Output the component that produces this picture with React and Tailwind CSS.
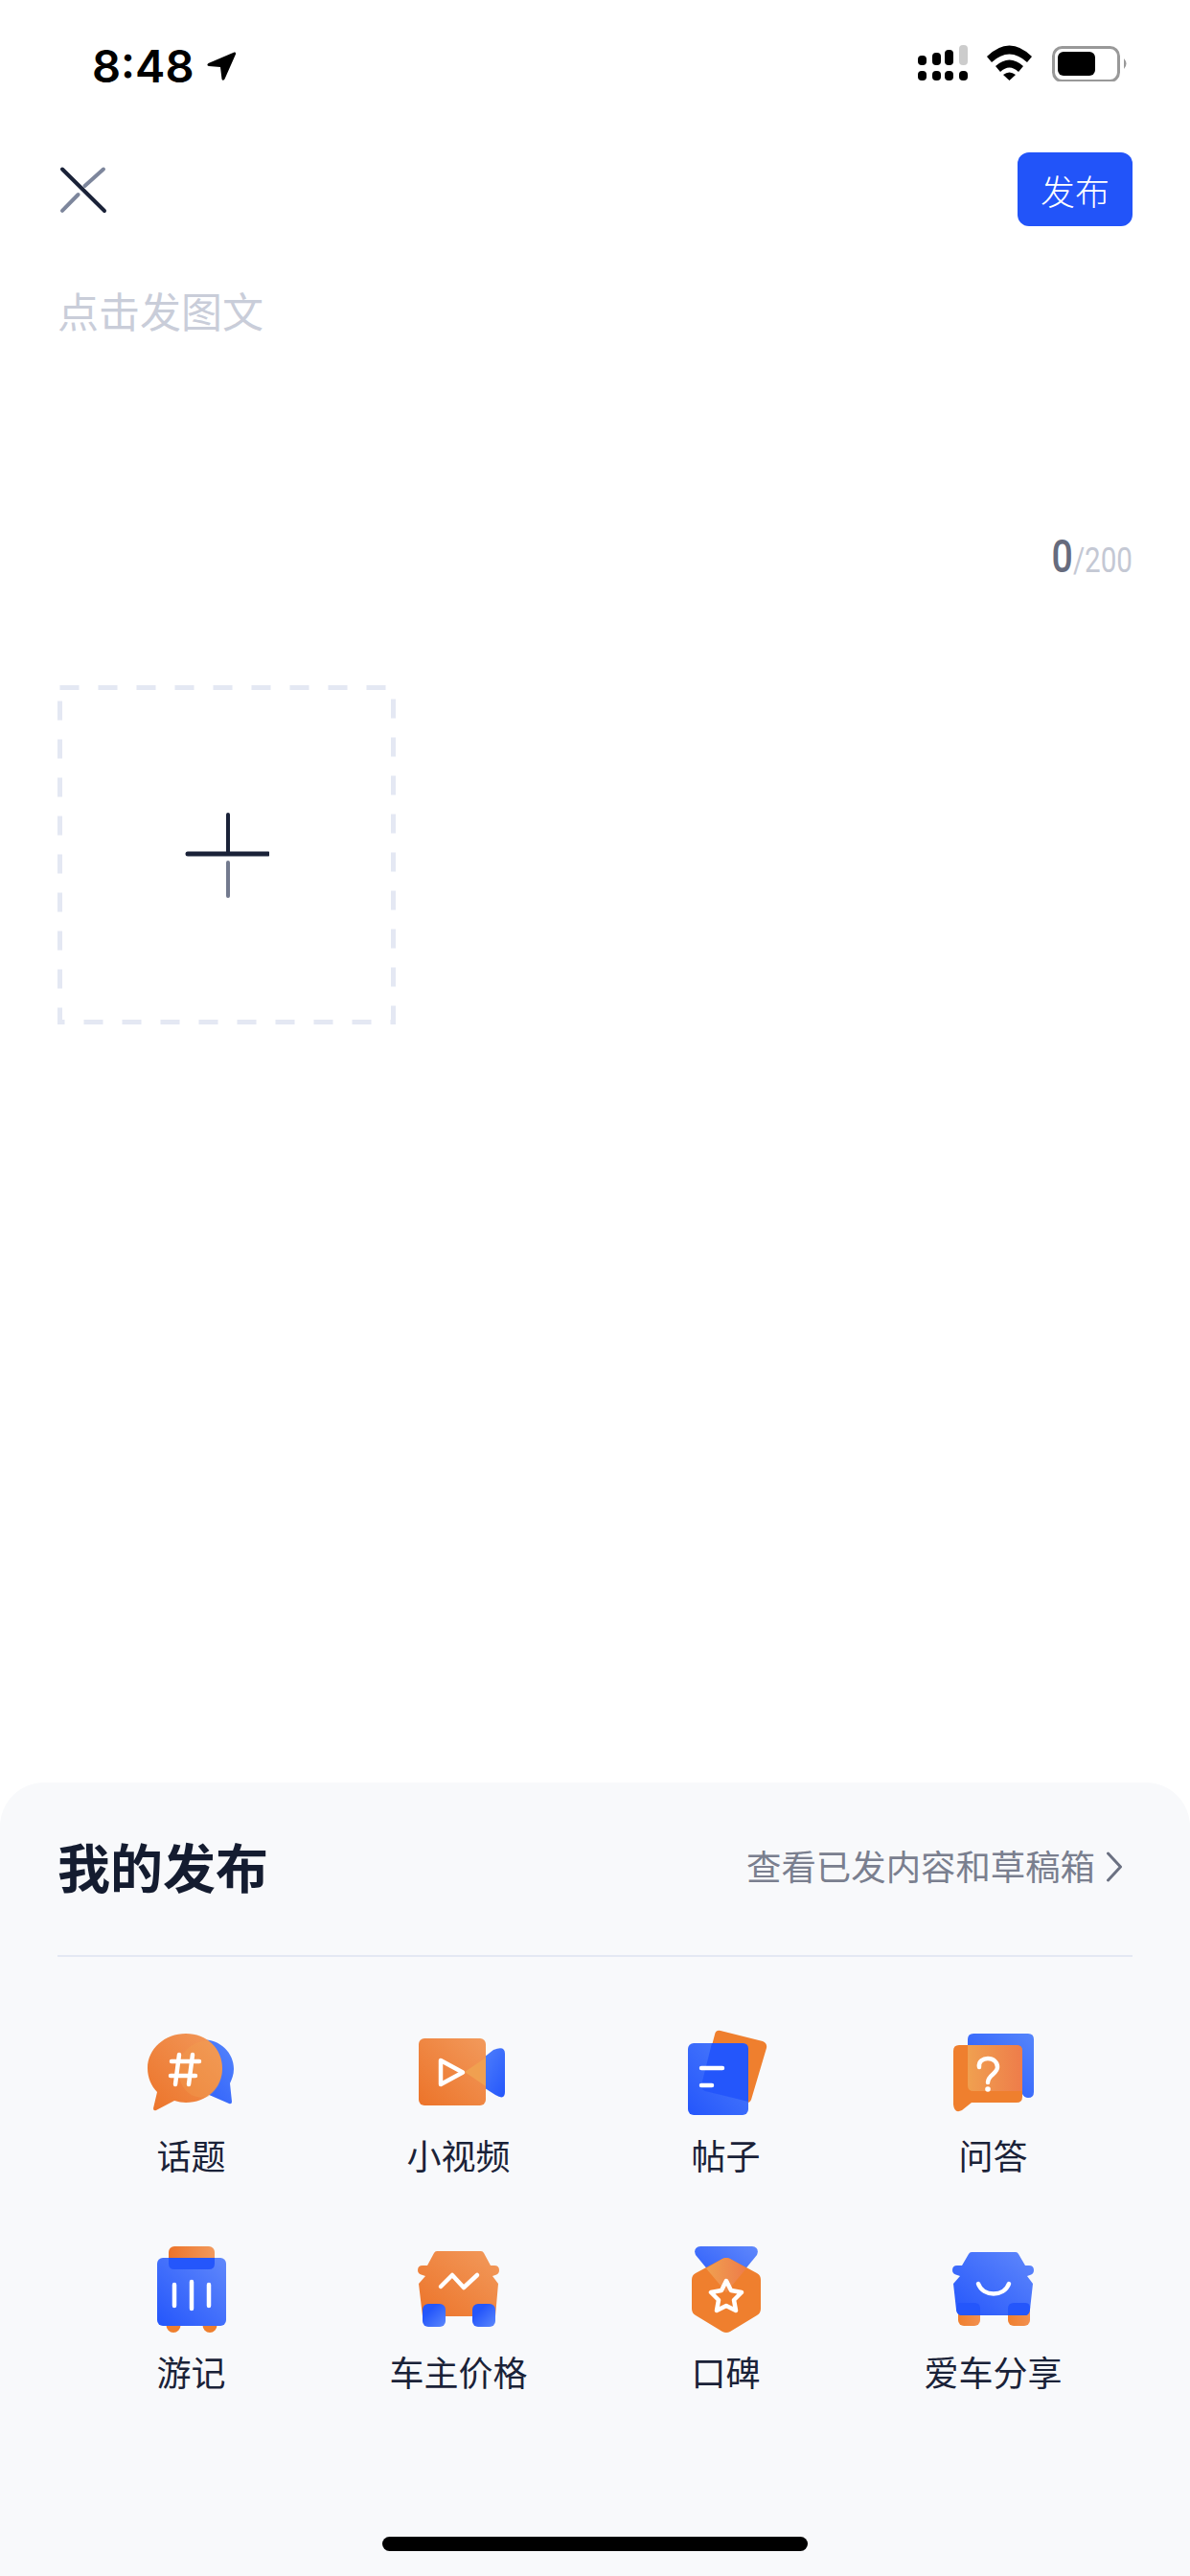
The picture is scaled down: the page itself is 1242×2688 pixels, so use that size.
import React from "react";

const cjk = "font-['Noto_Sans_CJK_SC','Noto_Sans',sans-serif]";

const LocationArrow = () => (
  <svg width="32" height="32" viewBox="0 0 32 32">
    <path d="M29.5 1.5 L2.5 13 Q0 15 3 16 L15 17 L16.5 29.5 Q17.5 32 19.5 29.5 L31 3.5 Q31.5 1 29.5 1.5 Z" fill="#000" />
  </svg>
);

const StatusIcons = () => (
  <svg width="219" height="38" viewBox="0 0 219 38">
    <rect x="0" y="11" width="9" height="10" rx="4" fill="#000" />
    <rect x="15" y="8" width="9" height="13" rx="4" fill="#000" />
    <rect x="28" y="5" width="9" height="16" rx="4" fill="#000" />
    <rect x="43" y="0" width="9" height="21" rx="4" fill="#ccc" />
    <rect x="0" y="27" width="9" height="10" rx="4" fill="#000" />
    <rect x="15" y="27" width="9" height="10" rx="4" fill="#000" />
    <rect x="28" y="27" width="9" height="10" rx="4" fill="#000" />
    <rect x="43" y="27" width="9" height="10" rx="4" fill="#000" />
    <path d="M72 12 Q95.5 -11 119 12 L114 18 Q95.5 1 77 18 Z" fill="#000" />
    <path d="M81 22 Q95.5 9 110 22 L105 28 Q95.5 19 86 28 Z" fill="#000" />
    <path d="M89 31 Q95.5 26 102 31 L95.5 37 Z" fill="#000" />
    <rect x="141.5" y="2.5" width="68" height="35" rx="9" fill="none" stroke="#999" strokeWidth="3" />
    <rect x="146" y="7" width="39" height="25" rx="6" fill="#000" />
    <path d="M215 14 Q220 19.5 215 25 Z" fill="#999" />
  </svg>
);

const TopicIcon = () => (
  <svg width="92" height="82" viewBox="0 0 92 82">
    <defs>
      <linearGradient id="ta" x1="0" y1="1" x2="1" y2="0">
        <stop offset="0" stopColor="#ec7329" />
        <stop offset="1" stopColor="#f29a5c" />
      </linearGradient>
      <linearGradient id="tb" x1="0" y1="1" x2="1" y2="0">
        <stop offset="0" stopColor="#2456fb" />
        <stop offset="1" stopColor="#5585fb" />
      </linearGradient>
    </defs>
    <path d="M48 7 C72 2 90 18 90 37 C90 43 88 47 86 52 L88 71 Q88 74 85 73 L62 63 C52 68 35 68 30 50 Z" fill="url(#tb)" />
    <path d="M40 0 C62 0 78 16 78 36 C78 56 62 72 40 72 C36 72 32 71 28 70 L9 80 Q6 81 6 78 L10 61 C4 55 0 46 0 36 C0 16 18 0 40 0 Z" fill="url(#ta)" />
    <path d="M63 7 C72 13 78 24 78 37 C78 50 72 60 63 66 C45 70 32 56 32 37 C32 22 45 8 63 7 Z" fill="#f0a050" opacity="0.35" />
    <path d="M33 22 L29 53 M47 22 L43 53 M25 29 L54 29 M24 44 L50 44" stroke="#fff" strokeWidth="4.5" strokeLinecap="round" />
  </svg>
);

const VideoIcon = () => (
  <svg width="97" height="72" viewBox="-7 0 97 72">
    <defs>
      <linearGradient id="va" x1="0" y1="1" x2="1" y2="0">
        <stop offset="0" stopColor="#ec7329" />
        <stop offset="1" stopColor="#f29a5c" />
      </linearGradient>
      <linearGradient id="vb" x1="0" y1="0" x2="1" y2="1">
        <stop offset="0" stopColor="#5585fb" />
        <stop offset="1" stopColor="#2456fb" />
      </linearGradient>
    </defs>
    <path d="M60 26 L78 12 Q90 7 90 16 L90 56 Q90 65 80 59 L60 46 Z" fill="url(#vb)" />
    <rect x="0" y="0" width="70" height="70" rx="6" fill="url(#va)" />
    <path d="M48 35 L70 20 L70 50 Z" fill="#f0a050" />
    <path d="M23 23 L23 48 L46 35.5 Z" fill="none" stroke="#fff" strokeWidth="4.5" strokeLinejoin="round" />
  </svg>
);

const PostIcon = () => (
  <svg width="88" height="90" viewBox="-4 0 88 90">
    <defs>
      <linearGradient id="pa" x1="0" y1="1" x2="1" y2="0">
        <stop offset="0" stopColor="#2456fb" />
        <stop offset="1" stopColor="#4f7ffb" />
      </linearGradient>
    </defs>
    <path d="M34 1 L78 12 Q83 14 82 19 L66 73 Q64 77 60 76 L18 64 Q13 62 14 58 L28 5 Q29 0 34 1 Z" fill="#ef7f2e" />
    <rect x="0" y="14" width="63" height="75" rx="6" fill="url(#pa)" />
    <path d="M25 14 L57 14 Q63 14 63 20 L63 75 L18 64 Q13 62 14 58 Z" fill="#2456fb" />
    <path d="M14 40 L36 40 M14 58 L25 58" stroke="#fff" strokeWidth="4.5" strokeLinecap="round" />
  </svg>
);

const QuestionIcon = () => (
  <svg width="84" height="82" viewBox="0 0 84 82">
    <defs>
      <linearGradient id="qa" x1="0" y1="1" x2="1" y2="0">
        <stop offset="0" stopColor="#2456fb" />
        <stop offset="1" stopColor="#5585fb" />
      </linearGradient>
      <linearGradient id="qb" x1="0" y1="0" x2="1" y2="0">
        <stop offset="0" stopColor="#f0a050" />
        <stop offset="1" stopColor="#ee7c4a" />
      </linearGradient>
    </defs>
    <path d="M15 6 Q15 0 21 0 L78 0 Q84 0 84 6 L84 61 Q84 67 78 67 Q74 67 72 63 L15 63 Z" fill="url(#qa)" />
    <path d="M0 18 Q0 12 6 12 L66 12 Q72 12 72 18 L72 66 Q72 72 66 72 L19 72 L9 80 Q1 84 0 74 Z" fill="#ef7f2e" />
    <path d="M15 12 L66 12 Q72 12 72 18 L72 60 L21 60 Q15 60 15 54 Z" fill="url(#qb)" />
    <path d="M27 35 C26 29 31 26 36 26 C42 26 46 30 46 35 C46 42 36 43 36 51" fill="none" stroke="#fff" strokeWidth="4.5" strokeLinecap="round" />
    <circle cx="36" cy="58" r="2.8" fill="#fff" />
  </svg>
);

const TravelIcon = () => (
  <svg width="72" height="90" viewBox="0 0 72 90">
    <defs>
      <linearGradient id="ra" x1="0" y1="0" x2="1" y2="0">
        <stop offset="0" stopColor="#ec7329" />
        <stop offset="1" stopColor="#f29a5c" />
      </linearGradient>
      <linearGradient id="rb" x1="0" y1="1" x2="1" y2="0">
        <stop offset="0" stopColor="#2456fb" />
        <stop offset="1" stopColor="#6088fb" />
      </linearGradient>
    </defs>
    <rect x="12" y="0" width="48" height="24" rx="6" fill="url(#ra)" />
    <circle cx="17" cy="82.5" r="7.5" fill="#ef7f2e" />
    <circle cx="55" cy="82.5" r="7.5" fill="#ef7f2e" />
    <rect x="0" y="12" width="72" height="71" rx="6" fill="url(#rb)" />
    <path d="M12 12 L60 12 L60 18 Q60 24 54 24 L18 24 Q12 24 12 18 Z" fill="#2456fb" />
    <path d="M18 40 L18 62 M36 37 L36 65 M54 40 L54 62" stroke="#fff" strokeWidth="4.5" strokeLinecap="round" />
  </svg>
);

const CarPriceIcon = () => (
  <svg width="86" height="80" viewBox="0 0 86 80">
    <defs>
      <linearGradient id="ca" x1="0" y1="1" x2="1" y2="0">
        <stop offset="0" stopColor="#ec7329" />
        <stop offset="1" stopColor="#f29a5c" />
      </linearGradient>
      <linearGradient id="cb" x1="0" y1="0" x2="1" y2="1">
        <stop offset="0.3" stopColor="#2456fb" />
        <stop offset="1" stopColor="#5c88fb" />
      </linearGradient>
    </defs>
    <path d="M20 0 L66 0 Q68 0 69 2 L76 15 L80 15 Q85 15 85 20 Q85 24 81 25 L78 26 L84 34 L81 68 L5 68 L1 34 L8 26 L5 25 Q0 24 0 20 Q0 15 5 15 L10 15 L17 2 Q18 0 20 0 Z" fill="url(#ca)" />
    <rect x="5" y="55" width="24" height="24" rx="6" fill="url(#cb)" />
    <rect x="57" y="55" width="24" height="24" rx="6" fill="url(#cb)" />
    <path d="M24 37 L36 25 L48 38 L62 25" fill="none" stroke="#fff" strokeWidth="4.5" strokeLinecap="round" strokeLinejoin="round" />
  </svg>
);

const MedalIcon = () => (
  <svg width="72" height="90" viewBox="0 0 72 90">
    <defs>
      <linearGradient id="ma" x1="0" y1="1" x2="1" y2="0">
        <stop offset="0" stopColor="#2456fb" />
        <stop offset="1" stopColor="#6088fb" />
      </linearGradient>
      <linearGradient id="mb" x1="0" y1="0" x2="1" y2="0">
        <stop offset="0" stopColor="#f0a050" />
        <stop offset="1" stopColor="#ee7c4a" />
      </linearGradient>
    </defs>
    <path d="M9 0 L63 0 Q71 1 68 9 L36 48 L4 9 Q1 1 9 0 Z" fill="url(#ma)" />
    <path d="M32 13 Q36 11 40 13 L68 28 Q72 30 72 35 L72 65 Q72 70 68 72 L40 89 Q36 91 32 89 L4 72 Q0 70 0 65 L0 35 Q0 30 4 28 Z" fill="#ef7f2e" />
    <path d="M32 13 Q36 11 40 13 L57 23 L36 48 L15 23 Z" fill="url(#mb)" />
    <path d="M36 36 L41 46 L52 48 L44 56 L46 67 L36 62 L26 67 L28 56 L20 48 L31 46 Z" fill="none" stroke="#fff" strokeWidth="4.5" strokeLinejoin="round" />
  </svg>
);

const CarShareIcon = () => (
  <svg width="86" height="78" viewBox="0 0 86 78">
    <defs>
      <linearGradient id="sa" x1="0" y1="1" x2="1" y2="0">
        <stop offset="0" stopColor="#2456fb" />
        <stop offset="1" stopColor="#6088fb" />
      </linearGradient>
      <linearGradient id="sb" x1="0" y1="0" x2="1" y2="0">
        <stop offset="0" stopColor="#ef7f2e" />
        <stop offset="1" stopColor="#f29050" />
      </linearGradient>
    </defs>
    <rect x="6" y="54" width="23" height="23" rx="6" fill="url(#sb)" />
    <rect x="58" y="54" width="23" height="23" rx="6" fill="url(#sb)" />
    <path d="M20 0 L66 0 Q68 0 69 2 L76 14 L80 14 Q85 14 85 19 Q85 23 81 24 L78 25 L84 33 L81 60 Q80 66 76 66 L10 66 Q5 66 4 60 L1 33 L8 25 L5 24 Q0 23 0 19 Q0 14 5 14 L10 14 L17 2 Q18 0 20 0 Z" fill="url(#sa)" />
    <path d="M6 53 L23 53 Q29 53 29 59 L29 66 L10 66 Q5 66 4 60 Z" fill="#2456fb" />
    <path d="M58 59 Q58 53 64 53 L76 53 Q82 53 81 60 Q80 66 76 66 L58 66 Z" fill="#2456fb" />
    <path d="M27 33 C32 47 54 47 59 33" fill="none" stroke="#fff" strokeWidth="4.5" strokeLinecap="round" />
  </svg>
);

const items = [
  { label: "话题", icon: TopicIcon },
  { label: "小视频", icon: VideoIcon },
  { label: "帖子", icon: PostIcon },
  { label: "问答", icon: QuestionIcon },
  { label: "游记", icon: TravelIcon },
  { label: "车主价格", icon: CarPriceIcon },
  { label: "口碑", icon: MedalIcon },
  { label: "爱车分享", icon: CarShareIcon },
];

export default function App() {
  return (
    <div className={`flex h-[2688px] w-[1242px] flex-col bg-white ${cjk}`}>
      {/* Status bar */}
      <div className="flex h-[159px] shrink-0 items-start justify-between pl-[96px] pr-[65px] pt-[47px]">
        <div className="flex items-center gap-[13px]">
          <span className="font-['Inter',sans-serif] text-[47px] font-semibold leading-[44px] text-black">8:48</span>
          <LocationArrow />
        </div>
        <StatusIcons />
      </div>

      {/* Header */}
      <div className="flex h-[77px] shrink-0 items-center justify-between px-[60px]">
        <svg width="52" height="52" viewBox="0 0 52 52">
          <path d="M48 4.5 L28.5 22 M21.6 31 L5 47.8" stroke="#7d869c" strokeWidth="4" strokeLinecap="round" />
          <path d="M5 4.5 L49 48" stroke="#1a2238" strokeWidth="4" strokeLinecap="round" />
        </svg>
        <button className="flex h-[77px] w-[120px] items-center justify-center rounded-[12px] bg-[#2254f9] text-[36px] font-light text-white">
          发布
        </button>
      </div>

      <div className="mt-[62px] shrink-0 px-[60px] text-[43px] leading-[50px] text-[#c9cdd9]">点击发图文</div>

      <div className="mt-[211px] flex h-[44px] shrink-0 origin-right scale-x-[0.8] items-baseline justify-end pr-[75px] font-['Roboto',sans-serif] leading-[44px]">
        <span className="text-[49px] font-medium text-[#666b7d]">0</span>
        <span className="text-[37px] text-[#c4c8d4]">/200</span>
      </div>

      {/* Upload box */}
      <div className="relative ml-[60px] mt-[112px] flex h-[354px] w-[353px] shrink-0 items-center justify-center">
        <svg className="absolute inset-0" width="353" height="354" viewBox="0 0 353 354">
          <rect x="2.5" y="2.5" width="348" height="349" fill="none" stroke="#e4e8f3" strokeWidth="5" strokeDasharray="20 20" />
        </svg>
        <svg width="88" height="90" viewBox="0 0 88 90">
          <path d="M45 3 L45 44" stroke="#1a2238" strokeWidth="4" strokeLinecap="round" />
          <path d="M3 44 L87 44" stroke="#1a2238" strokeWidth="5" strokeLinecap="round" />
          <path d="M45 53 L45 88" stroke="#737a8e" strokeWidth="4" strokeLinecap="round" />
        </svg>
      </div>

      {/* Bottom sheet */}
      <div className="relative mt-auto flex h-[828px] shrink-0 flex-col rounded-t-[46px] bg-[#f8f9fb] px-[60px]">
        <div className="flex h-[182px] shrink-0 items-center justify-between border-b-2 border-[#e4e8f3] pb-[7px] pr-[10px]">
          <span className="text-[55px] font-bold text-[#141c30]">我的发布</span>
          <span className="flex items-center gap-[11px] text-[36.4px] text-[#7a7f8f]">
            查看已发内容和草稿箱
            <svg className="mt-[3px]" width="18" height="32" viewBox="0 0 18 32">
              <path d="M2.5 2 L15.5 16 L2.5 30" fill="none" stroke="#6b7182" strokeWidth="3" strokeLinecap="round" strokeLinejoin="round" />
            </svg>
          </span>
        </div>
        <div className="mt-[76px] grid w-[1116px] grid-cols-4 gap-y-[73px]">
          {items.map(({ label, icon: Icon }) => (
            <div key={label} className="flex flex-col items-center">
              <div className="flex h-[90px] items-center justify-center">
                <Icon />
              </div>
              <span className="mt-[17px] text-[36px] leading-[46px] text-[#1a2238]">{label}</span>
            </div>
          ))}
        </div>
        <div className="absolute bottom-[26px] left-[399px] h-[15px] w-[444px] rounded-full bg-black" />
      </div>
    </div>
  );
}
